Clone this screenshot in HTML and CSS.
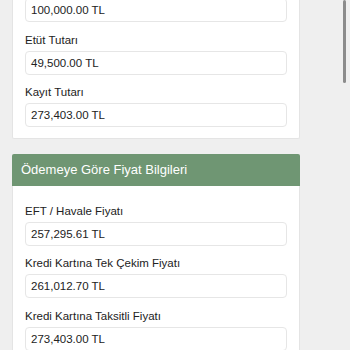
FILE: index.html
```html
<!DOCTYPE html>
<html lang="tr">
<head>
<meta charset="utf-8">
<title>Fiyat Bilgileri</title>
<link rel="stylesheet" href="styles.css">
</head>
<body>
<div class="page">
  <section class="card card--scrolled">
    <div class="card-body">
      <div class="field field--first">
        <div class="input">100,000.00 TL</div>
      </div>
      <div class="field">
        <label class="label">Etüt Tutarı</label>
        <div class="input">49,500.00 TL</div>
      </div>
      <div class="field">
        <label class="label">Kayıt Tutarı</label>
        <div class="input">273,403.00 TL</div>
      </div>
    </div>
  </section>

  <section class="card">
    <header class="card-header">Ödemeye Göre Fiyat Bilgileri</header>
    <div class="card-body">
      <div class="field">
        <label class="label">EFT / Havale Fiyatı</label>
        <div class="input">257,295.61 TL</div>
      </div>
      <div class="field">
        <label class="label">Kredi Kartına Tek Çekim Fiyatı</label>
        <div class="input">261,012.70 TL</div>
      </div>
      <div class="field">
        <label class="label">Kredi Kartına Taksitli Fiyatı</label>
        <div class="input">273,403.00 TL</div>
      </div>
    </div>
  </section>
</div>
<div class="scroll-thumb"></div>
</body>
</html>
```

FILE: styles.css
```css
html, body {
  margin: 0;
  padding: 0;
  height: 100%;
  overflow: hidden;
  background: #efefef;
  font-family: "Liberation Sans", Arial, sans-serif;
  color: #222;
}

.page {
  width: 288px;
  margin-left: 12px;
  display: flex;
  flex-direction: column;
  gap: 15px;
}

.card {
  background: #fff;
  border: 1px solid #e4e4e4;
  border-radius: 2px;
}

.card--scrolled {
  margin-top: -12px;
  border-top: none;
}

.card-header {
  background: #6f9673;
  color: #fff;
  font-size: 13px;
  height: 32px;
  line-height: 32px;
  padding-left: 9px;
  margin: -1px -1px 0 -1px;
  border-radius: 2px 2px 0 0;
}

.card-body {
  padding: 7px 12px 11px 12px;
}

.field {
  display: flex;
  flex-direction: column;
}

.field--first {
  padding-top: 3px;
}

.label {
  font-size: 11.5px;
  line-height: 14px;
  margin-top: 10.5px;
  margin-bottom: 4px;
}

.input {
  height: 24px;
  box-sizing: border-box;
  border: 1px solid #e6e6e6;
  border-radius: 4px;
  padding-left: 5px;
  font-size: 11.5px;
  line-height: 22px;
  color: #222;
  background: #fff;
}

.scroll-thumb {
  position: absolute;
  top: 0;
  right: 4px;
  width: 3px;
  height: 83px;
  border-radius: 2px;
  background: #8c8c8c;
}
```
